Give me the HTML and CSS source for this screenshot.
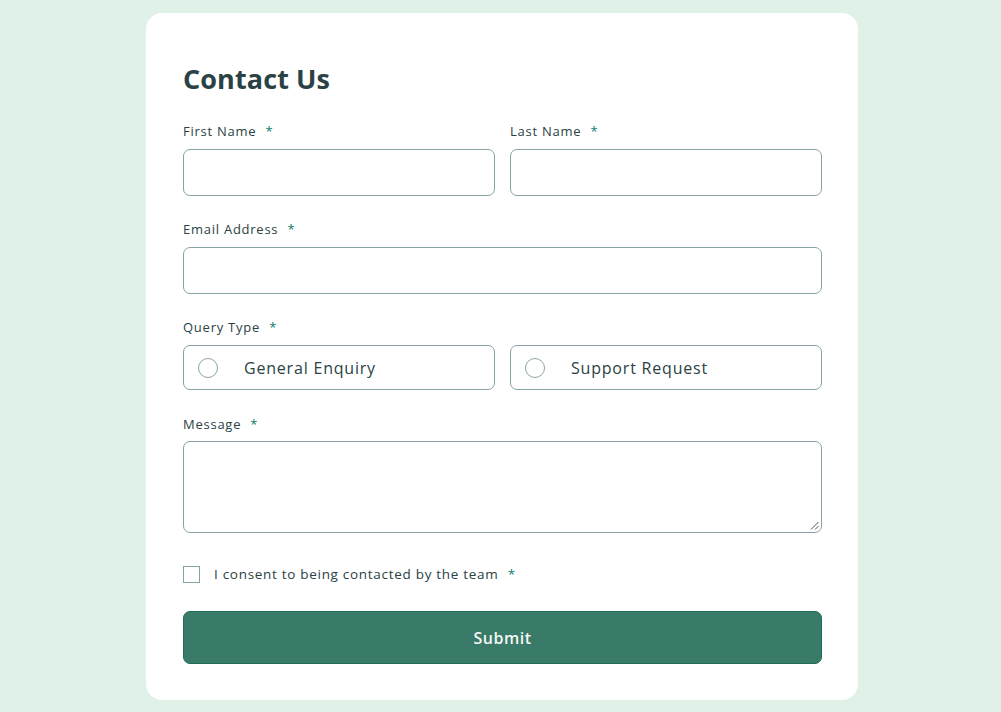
FILE: index.html
```html
<!DOCTYPE html>
<html lang="en">
<head>
<meta charset="utf-8">
<title>Contact Us</title>
<link rel="stylesheet" href="styles.css">
</head>
<body>
<main class="page">
  <form class="card">
    <h1 class="title">Contact Us</h1>
    <div class="row two">
      <div class="field">
        <label class="label">First Name <span class="req">*</span></label>
        <div class="input"></div>
      </div>
      <div class="field">
        <label class="label">Last Name <span class="req">*</span></label>
        <div class="input"></div>
      </div>
    </div>
    <div class="field email">
      <label class="label">Email Address <span class="req">*</span></label>
      <div class="input"></div>
    </div>
    <div class="field">
      <label class="label">Query Type <span class="req">*</span></label>
      <div class="two">
        <div class="radio-box"><span class="radio"></span><span class="radio-text">General Enquiry</span></div>
        <div class="radio-box"><span class="radio"></span><span class="radio-text">Support Request</span></div>
      </div>
    </div>
    <div class="field message">
      <label class="label">Message <span class="req">*</span></label>
      <div class="textarea">
        <svg class="grip" width="9" height="9" viewBox="0 0 9 9"><path d="M8.5 1L1 8.5M8.5 5L5 8.5" stroke="#555" stroke-width="1" fill="none"/></svg>
      </div>
    </div>
    <div class="consent">
      <span class="check"></span>
      <span class="consent-text">I consent to being contacted by the team <span class="req">*</span></span>
    </div>
    <div class="button">Submit</div>
  </form>
</main>
</body>
</html>
```
FILE: styles.css
```css
* { box-sizing: border-box; }
html, body { margin: 0; padding: 0; }
body {
  background: #e0f1e8;
  font-family: "Open Sans", "Liberation Sans", sans-serif;
  color: #2a4244;
}
.page {
  display: flex;
  justify-content: center;
  padding: 13px 0 0 3px;
  height: 712px;
  overflow: hidden;
}
.card {
  width: 712px;
  height: 687px;
  background: #ffffff;
  border-radius: 16px;
  padding: 49px 36px 37px 37px;
  display: flex;
  flex-direction: column;
}
.title {
  margin: 0 0 27px 0;
  font-size: 27px;
  line-height: 34px;
  font-weight: 700;
  color: #2a4244;
  letter-spacing: 0.1px;
}
.two {
  display: grid;
  grid-template-columns: 1fr 1fr;
  column-gap: 15px;
}
.row { margin-bottom: 25px; }
.field { display: flex; flex-direction: column; margin-bottom: 26px; }
.row .field { margin-bottom: 0; }
.field.email { margin-bottom: 25px; }
.label {
  font-size: 13px;
  line-height: 17px;
  letter-spacing: 0.75px;
  margin-bottom: 9px;
  color: #2a4244;
}
.message .label { margin-bottom: 8px; }
.req { color: #0c7d69; margin-left: 5px; }
.input {
  height: 47px;
  border: 1px solid #87a3a6;
  border-radius: 7px;
}
.radio-box {
  height: 45px;
  border: 1px solid #87a3a6;
  border-radius: 7px;
  display: flex;
  align-items: center;
  padding-left: 14px;
}
.radio {
  width: 20px;
  height: 20px;
  border: 1.5px solid #87a3a6;
  border-radius: 50%;
  margin-right: 26px;
}
.radio-text {
  font-size: 16px;
  letter-spacing: 0.8px;
  color: #2a4244;
}
.textarea {
  height: 92px;
  border: 1px solid #87a3a6;
  border-radius: 7px;
  position: relative;
}
.grip { position: absolute; right: 2px; bottom: 2px; }
.consent {
  display: flex;
  align-items: center;
  margin-top: 6px;
  margin-bottom: 28px;
}
.check {
  width: 17px;
  height: 17px;
  border: 1.5px solid #87a3a6;
  margin-right: 14px;
}
.consent-text {
  font-size: 13.5px;
  letter-spacing: 0.7px;
  color: #2a4244;
}
.button {
  height: 53px;
  flex: none;
  background: #3a7a68;
  border: 1px solid #1f6b56;
  border-radius: 7px;
  display: flex;
  align-items: center;
  justify-content: center;
  color: #f3f8f5;
  font-size: 16px;
  font-weight: 600;
  letter-spacing: 0.5px;
}
```
